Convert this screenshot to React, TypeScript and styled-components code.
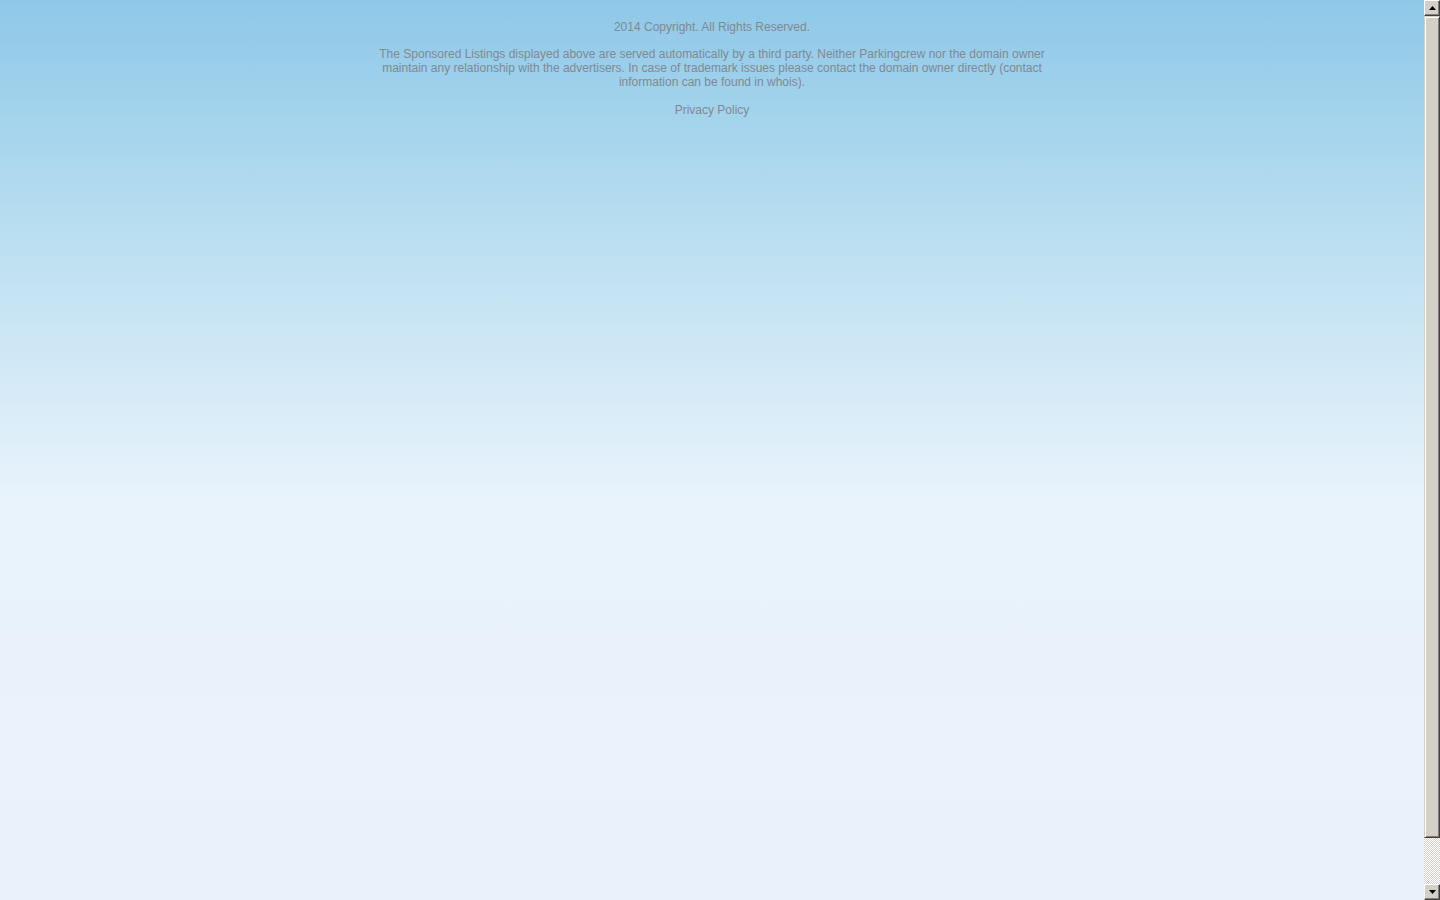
import styled, { createGlobalStyle } from 'styled-components';

const GlobalStyle = createGlobalStyle`
  html, body {
    margin: 0;
    padding: 0;
    height: 100%;
    overflow: hidden;
  }
  body {
    font-family: "Liberation Sans", Arial, sans-serif;
  }
`;

const Page = styled.div`
  display: flex;
  width: 1440px;
  height: 900px;
`;

const Main = styled.div`
  flex: 1;
  background: linear-gradient(to bottom, #8ec8e8 0px, #bde0f1 250px, #e9f3fb 500px, #eaf1fa 900px);
  display: flex;
  justify-content: center;
`;

const Footer = styled.div`
  width: 680px;
  padding-top: 20px;
  text-align: center;
  color: #7f8a92;
  font-size: 12px;
  line-height: 14px;
`;

const Line = styled.p<{ $gap?: number }>`
  margin: 0 0 ${(p) => p.$gap ?? 14}px;
`;

const Link = styled.a`
  color: inherit;
  text-decoration: none;
`;

const Scrollbar = styled.div`
  width: 16px;
  display: flex;
  flex-direction: column;
  background-color: #ffffff;
  background-image: repeating-conic-gradient(#d4d0c8 0 25%, #ffffff 0 50%);
  background-size: 2px 2px;
`;

const Arrow = styled.div`
  width: 16px;
  height: 16px;
  box-sizing: border-box;
  background: #d4d0c8;
  border-top: 1px solid #ffffff;
  border-left: 1px solid #ffffff;
  border-right: 1px solid #404040;
  border-bottom: 1px solid #404040;
  box-shadow: inset -1px -1px 0 #808080;
  display: flex;
  align-items: center;
  justify-content: center;
`;

const Thumb = styled.div`
  height: 822px;
  box-sizing: border-box;
  background: #d4d0c8;
  border-top: 1px solid #d4d0c8;
  border-left: 1px solid #d4d0c8;
  border-right: 1px solid #404040;
  border-bottom: 1px solid #404040;
  box-shadow: inset 1px 1px 0 #ffffff, inset -1px -1px 0 #808080;
`;

const Track = styled.div`
  flex: 1;
`;

const Triangle = ({ down }: { down?: boolean }) => (
  <svg width="7" height="4" viewBox="0 0 7 4">
    <polygon points={down ? '0,0 7,0 3.5,4' : '3.5,0 7,4 0,4'} fill="#000" />
  </svg>
);

export default function App() {
  return (
    <>
      <GlobalStyle />
      <Page>
        <Main>
          <Footer>
            <Line $gap={13}>2014 Copyright. All Rights Reserved.</Line>
            <Line>
              The Sponsored Listings displayed above are served automatically by a third party. Neither Parkingcrew nor the domain owner maintain any relationship with the advertisers. In case of trademark issues please contact the domain owner directly (contact information can be found in whois).
            </Line>
            <Line>
              <Link href="#">Privacy Policy</Link>
            </Line>
          </Footer>
        </Main>
        <Scrollbar>
          <Arrow><Triangle /></Arrow>
          <Thumb />
          <Track />
          <Arrow><Triangle down /></Arrow>
        </Scrollbar>
      </Page>
    </>
  );
}
